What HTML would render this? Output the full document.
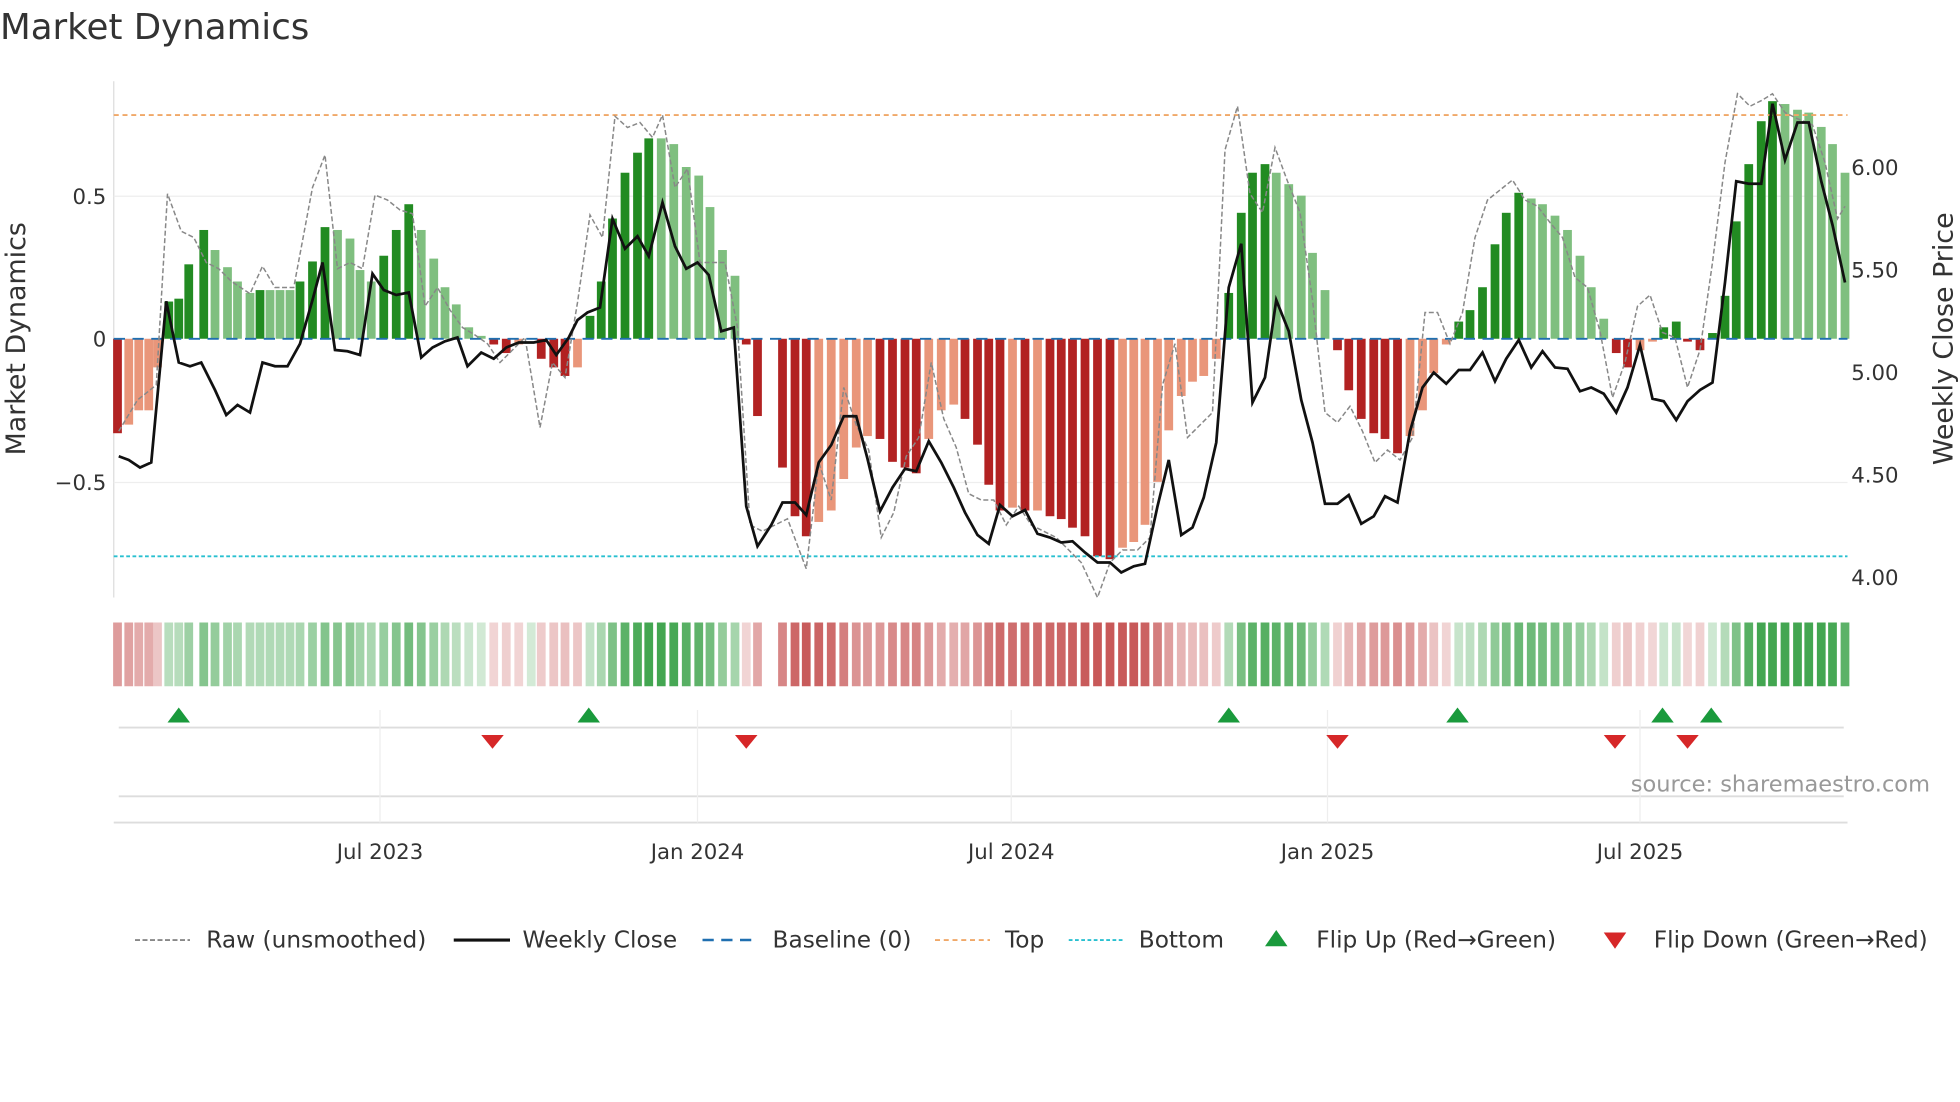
<!DOCTYPE html>
<html><head><meta charset="utf-8"><style>
html,body{margin:0;padding:0;background:#fff;}
svg{display:block;font-family:"DejaVu Sans","Liberation Sans",sans-serif;}
</style></head><body>
<svg id="s" width="1960" height="1102" viewBox="0 0 1568 881.6" xmlns="http://www.w3.org/2000/svg">
<rect width="1568" height="882" fill="#fff"/>
<text x="0" y="31" font-size="28.5" fill="#333">Market Dynamics</text>
<line x1="91" y1="65" x2="91" y2="478" stroke="#ddd"/>
<line x1="91" y1="157" x2="1478" y2="157" stroke="#eee"/>
<line x1="91" y1="386" x2="1478" y2="386" stroke="#eee"/>
<g font-size="17" fill="#333" text-anchor="end">
<text x="85" y="163">0.5</text><text x="85" y="277">0</text><text x="85" y="392">−0.5</text>
</g>
<g font-size="17" fill="#333">
<text x="1481" y="140">6.00</text><text x="1481" y="222">5.50</text><text x="1481" y="304">5.00</text><text x="1481" y="386">4.50</text><text x="1481" y="468">4.00</text>
</g>
<text transform="translate(20,271) rotate(-90)" font-size="21.5" fill="#333" text-anchor="middle">Market Dynamics</text>
<text transform="translate(1562,271) rotate(-90)" font-size="21.5" fill="#333" text-anchor="middle">Weekly Close Price</text>
<g id="bars"></g>
<line x1="91" y1="92" x2="1478" y2="92" stroke="#f0a868" stroke-width="1.5" stroke-dasharray="4,3"/>
<line x1="91" y1="445" x2="1478" y2="445" stroke="#29c0d0" stroke-width="1.5" stroke-dasharray="3,2"/>
<line x1="91" y1="271" x2="1478" y2="271" stroke="#1f6fb0" stroke-width="1.5" stroke-dasharray="9,6"/>
<polyline id="raw" fill="none" stroke="#888" stroke-width="1.2" stroke-dasharray="4,2"/>
<polyline id="close" fill="none" stroke="#111" stroke-width="2.2"/>
<g id="heat"></g>
<line x1="95" y1="582" x2="1475" y2="582" stroke="#ddd" stroke-width="1.5"/>
<line x1="95" y1="637" x2="1475" y2="637" stroke="#ddd" stroke-width="1.5"/>
<line x1="91" y1="658" x2="1478" y2="658" stroke="#ddd" stroke-width="1.5"/>
<g stroke="#eee"><line x1="304" y1="568" x2="304" y2="658"/><line x1="558" y1="568" x2="558" y2="658"/><line x1="809" y1="568" x2="809" y2="658"/><line x1="1062" y1="568" x2="1062" y2="658"/><line x1="1312" y1="568" x2="1312" y2="658"/></g>
<g id="flips"></g>
<text x="1544" y="633" font-size="18" fill="#999" text-anchor="end">source: sharemaestro.com</text>
<g font-size="17" fill="#333" text-anchor="middle">
<text x="304" y="687">Jul 2023</text><text x="558" y="687">Jan 2024</text><text x="809" y="687">Jul 2024</text><text x="1062" y="687">Jan 2025</text><text x="1312" y="687">Jul 2025</text>
</g>
<g font-size="18.6" fill="#333">
<line x1="108" y1="752" x2="152" y2="752" stroke="#888" stroke-width="1.5" stroke-dasharray="4,2"/><text x="165" y="758">Raw (unsmoothed)</text>
<line x1="363" y1="752" x2="408" y2="752" stroke="#111" stroke-width="2.5"/><text x="418" y="758">Weekly Close</text>
<line x1="562" y1="752" x2="606" y2="752" stroke="#1f6fb0" stroke-width="2" stroke-dasharray="9,6"/><text x="618" y="758">Baseline (0)</text>
<line x1="748" y1="752" x2="792" y2="752" stroke="#f0a868" stroke-width="1.5" stroke-dasharray="4,3"/><text x="804" y="758">Top</text>
<line x1="855" y1="752" x2="899" y2="752" stroke="#29c0d0" stroke-width="1.5" stroke-dasharray="3,2"/><text x="911" y="758">Bottom</text>
<polygon points="1021,744 1012,757 1030,757" fill="#1a9a3c"/><text x="1053" y="758">Flip Up (Red→Green)</text>
<polygon points="1292,759 1283,746 1301,746" fill="#d62728"/><text x="1323" y="758">Flip Down (Green→Red)</text>
</g>
</svg>
<script>
var V=[[94,-.33],[103,-.3],[111,-.25],[119,-.25],[126,-.1],[135,.13],[143,.14],[151,.26],[163,.38],[172,.31],[182,.25],[190,.2],[200,.16],[208,.17],[216,.17],[224,.17],[232,.17],[240,.2],[250,.27],[260,.39],[270,.38],[280,.35],[288,.24],[297,.2],[307,.29],[317,.38],[327,.47],[337,.38],[347,.28],[356,.18],[365,.12],[375,.04],[385,.01],[395,-.02],[405,-.05],[415,-.02],[425,0],[433,-.07],[443,-.1],[452,-.13],[462,-.1],[472,.08],[481,.2],[490,.42],[500,.58],[510,.65],[519,.7],[529,.7],[539,.68],[549,.6],[559,.57],[568,.46],[578,.31],[588,.22],[597,-.02],[606,-.27],[626,-.45],[636,-.62],[645,-.69],[655,-.64],[665,-.6],[675,-.49],[685,-.38],[694,-.34],[704,-.35],[714,-.43],[724,-.45],[733,-.47],[743,-.35],[753,-.25],[763,-.23],[772,-.28],[782,-.37],[791,-.51],[800,-.6],[810,-.59],[820,-.6],[830,-.6],[840,-.62],[849,-.63],[858,-.66],[868,-.69],[878,-.76],[888,-.77],[898,-.73],[907,-.71],[916,-.65],[926,-.5],[935,-.32],[945,-.2],[954,-.15],[963,-.13],[973,-.07],[983,.16],[993,.44],[1002,.58],[1012,.61],[1021,.58],[1031,.54],[1041,.5],[1050,.3],[1060,.17],[1070,-.04],[1079,-.18],[1089,-.28],[1099,-.33],[1108,-.35],[1118,-.4],[1128,-.34],[1138,-.25],[1147,-.12],[1157,-.02],[1167,.06],[1176,.1],[1186,.18],[1196,.33],[1205,.44],[1215,.51],[1225,.49],[1234,.47],[1244,.43],[1254,.38],[1264,.29],[1273,.18],[1283,.07],[1293,-.05],[1302,-.1],[1312,-.04],[1322,-.01],[1331,.04],[1341,.06],[1350,-.01],[1360,-.04],[1370,.02],[1380,.15],[1389,.41],[1399,.61],[1409,.76],[1418,.83],[1428,.82],[1438,.8],[1447,.79],[1457,.74],[1466,.68],[1476,.58]];
var NS="http://www.w3.org/2000/svg";function el(t,a,p){var e=document.createElementNS(NS,t);for(var k in a)e.setAttribute(k,a[k]);p.appendChild(e);return e;}
var B=document.getElementById('bars'),H=document.getElementById('heat'),prev=0;
V.forEach(function(d,i){var x=d[0],v=d[1],c;
 if(v>=0)c=v>prev?'#228b22':'#7fbf7f';else c=v<prev?'#b22222':'#e9967a';prev=v;
 var y=271-v*229;el('rect',{x:x-3.5,y:Math.min(y,271),width:7,height:Math.max(Math.abs(v*229),0.5),fill:c},B);
 var a=0.2+0.65*Math.min(Math.abs(v)/0.7,1);
 el('rect',{x:x-3.5,y:498,width:7,height:51,fill:v>=0?'rgba(34,150,50,'+a+')':'rgba(190,60,60,'+a+')'},H);});
document.getElementById('close').setAttribute('points',"95,365 103,368 112,374 121,370 133,241 143,290 152,293 161,290 172,312 181,332 190,324 200,330 210,290 220,293 230,293 240,275 250,240 258,210 268,280 278,281 288,284 298,219 307,232 317,236 327,234 337,286 346,278 356,273 366,270 374,293 385,282 395,287 405,278 415,274 427,274 437,272 445,284 455,270 462,256 470,250 480,246 490,175 500,199 510,189 519,205 530,162 540,197 549,215 558,210 567,220 577,265 587,262 597,405 606,437 617,420 626,402 636,402 645,412 655,370 665,356 675,333 685,333 694,367 704,409 714,390 724,375 733,377 743,353 753,370 763,390 772,410 782,428 791,435 800,404 810,413 820,408 830,427 840,430 849,434 858,433 868,442 878,450 888,450 897,458 907,453 916,451 926,405 935,368 945,428 954,422 963,398 973,354 983,230 993,195 1002,322 1012,302 1021,240 1031,265 1041,320 1050,354 1060,403 1070,403 1079,396 1089,419 1099,413 1108,397 1118,402 1128,345 1138,310 1147,298 1157,307 1167,296 1176,296 1186,282 1196,305 1205,287 1215,272 1225,294 1234,281 1244,294 1254,295 1264,313 1273,310 1283,315 1293,330 1302,310 1312,276 1322,319 1331,321 1341,336 1350,321 1360,312 1370,306 1380,226 1389,145 1399,147 1409,147 1418,83 1428,128 1438,98 1447,98 1457,145 1466,180 1476,226");
document.getElementById('raw').setAttribute('points',"95,345 110,320 125,308 134,155 145,185 155,190 165,210 175,215 185,225 200,235 210,213 220,230 235,230 250,150 260,124 270,215 280,210 290,215 300,156 310,160 320,168 330,171 340,245 350,230 360,248 370,262 380,268 390,275 400,290 410,280 420,270 432,342 442,290 452,302 462,242 472,172 482,190 492,93 502,102 512,98 522,110 530,92 540,150 550,135 560,210 570,210 580,210 590,262 600,420 610,425 620,420 630,415 645,455 655,370 665,400 675,310 685,340 695,360 705,430 715,410 725,365 735,350 745,290 755,335 765,358 775,395 785,400 795,400 805,420 815,405 825,420 835,425 845,430 855,440 865,450 878,478 888,450 898,440 910,440 920,430 930,308 940,275 950,350 960,340 970,330 980,120 990,85 1000,155 1010,170 1020,118 1030,145 1040,170 1050,240 1060,330 1070,338 1080,325 1090,345 1100,370 1110,360 1120,368 1130,350 1140,250 1150,250 1160,275 1170,250 1180,190 1190,160 1200,152 1210,144 1220,160 1230,165 1240,178 1250,190 1260,222 1270,230 1280,265 1290,318 1300,290 1310,245 1320,236 1330,266 1340,270 1350,310 1360,280 1370,210 1380,130 1390,75 1400,85 1410,80 1418,75 1428,90 1438,95 1450,100 1460,130 1470,175 1476,165");
var F=document.getElementById('flips');
[143,471,983,1166,1330,1369].forEach(function(x){el('polygon',{points:x+',566 '+(x-9)+',578 '+(x+9)+',578',fill:'#1a9a3c'},F);});
[394,597,1070,1292,1350].forEach(function(x){el('polygon',{points:x+',599 '+(x-9)+',588 '+(x+9)+',588',fill:'#d62728'},F);});
</script>
</body></html>
